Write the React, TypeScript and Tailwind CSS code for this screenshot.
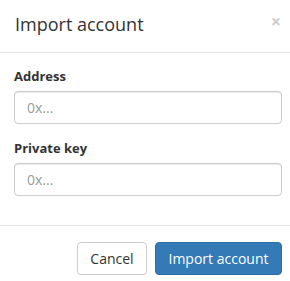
import React from "react";

export default function App() {
  return (
    <div className="w-[290px] h-[281px] bg-white overflow-hidden text-[#333] font-['Open_Sans',sans-serif]">
      <div className="flex items-start justify-between pl-[15px] pr-[9px] pt-[11px] pb-[15px] border-b border-[#e5e5e5]">
        <h4 className="text-[18px] leading-[26px] font-normal m-0">Import account</h4>
        <button className="text-[18px] leading-[20px] font-bold text-black opacity-20">×</button>
      </div>
      <div className="pl-[14px] pr-[8px] pt-[14px] pb-[14px]">
        <div className="mb-[15px]">
          <label className="block text-[13px] leading-[19px] font-bold mb-[5px]">Address</label>
          <input
            className="block w-full h-[33px] border border-[#ccc] rounded-[4px] px-[12px] text-[14px] text-[#555] placeholder:text-[#999] shadow-[inset_0_1px_1px_rgba(0,0,0,0.075)] outline-none"
            placeholder="0x..."
          />
        </div>
        <div className="mb-[15px]">
          <label className="block text-[13px] leading-[19px] font-bold mb-[5px]">Private key</label>
          <input
            className="block w-full h-[33px] border border-[#ccc] rounded-[4px] px-[12px] text-[14px] text-[#555] placeholder:text-[#999] shadow-[inset_0_1px_1px_rgba(0,0,0,0.075)] outline-none"
            placeholder="0x..."
          />
        </div>
      </div>
      <div className="flex justify-end gap-[8px] pr-[8px] pt-[16px] border-t border-[#e5e5e5]">
        <button className="w-[70px] h-[33px] border border-[#ccc] rounded-[4px] bg-white text-[14px] text-[#333]">Cancel</button>
        <button className="w-[127px] h-[33px] border border-[#2e6da4] rounded-[4px] bg-[#337ab7] text-[14px] text-white">Import account</button>
      </div>
    </div>
  );
}
